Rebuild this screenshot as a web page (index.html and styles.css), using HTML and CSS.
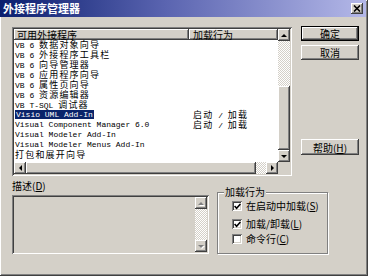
FILE: index.html
```html
<!DOCTYPE html>
<html lang="zh-CN">
<head>
    <meta charset="UTF-8">
    <title>外接程序管理器</title>
    <link rel="stylesheet" href="styles.css">
</head>
<body>
    <div class="window">
        <div class="titlebar">
            <span class="title">外接程序管理器</span>
            <div class="close raised">
                <svg width="8" height="7" viewBox="0 0 8 7">
                    <path d="M1 0.5 L7 6.5 M7 0.5 L1 6.5" stroke="#000" stroke-width="1.6" fill="none"/>
                </svg>
            </div>
        </div>

        <div class="content">
            <div class="top">
                <div class="listview">
                    <div class="lv-main">
                        <div class="lv-header">
                            <div class="hcell col1 raised">可用外接程序</div>
                            <div class="hcell col2 raised">加载行为</div>
                        </div>
                        <div class="lv-rows">
                            <div class="row"><span class="c1">VB 6 <span class="zh">数据对象向导</span></span></div>
                            <div class="row"><span class="c1">VB 6 <span class="zh">外接程序工具栏</span></span></div>
                            <div class="row"><span class="c1">VB 6 <span class="zh">向导管理器</span></span></div>
                            <div class="row"><span class="c1">VB 6 <span class="zh">应用程序向导</span></span></div>
                            <div class="row"><span class="c1">VB 6 <span class="zh">属性页向导</span></span></div>
                            <div class="row"><span class="c1">VB 6 <span class="zh">资源编辑器</span></span></div>
                            <div class="row"><span class="c1">VB T-SQL <span class="zh">调试器</span></span></div>
                            <div class="row"><span class="c1"><span class="sel">Visio UML Add-In</span></span><span class="c2"><span class="zh">启动</span> / <span class="zh">加载</span></span></div>
                            <div class="row"><span class="c1">Visual Component Manager 6.0</span><span class="c2"><span class="zh">启动</span> / <span class="zh">加载</span></span></div>
                            <div class="row"><span class="c1">Visual Modeler Add-In</span></div>
                            <div class="row"><span class="c1">Visual Modeler Menus Add-In</span></div>
                            <div class="row"><span class="c1"><span class="zh">打包和展开向导</span></span></div>
                        </div>
                    </div>
                    <div class="vscroll">
                        <div class="sb-btn raised"><span class="arr up"></span></div>
                        <div class="track" style="height: 45px"></div>
                        <div class="thumb raised" style="height: 64px"></div>
                        <div class="sb-btn raised"><span class="arr down"></span></div>
                    </div>
                    <div class="hscroll">
                        <div class="sb-btn raised"><span class="arr left"></span></div>
                        <div class="thumb raised" style="width: 230px"></div>
                        <div class="track" style="width: 10px"></div>
                        <div class="sb-btn raised"><span class="arr right"></span></div>
                    </div>
                    <div class="corner"></div>
                </div>

                <div class="buttons">
                    <div class="btn default">确定</div>
                    <div class="btn raised">取消</div>
                    <div class="btn raised help">帮助(<u>H</u>)</div>
                </div>
            </div>

            <div class="bottom">
                <div class="desc">
                    <div class="desc-label">描述(<u>D</u>)</div>
                    <div class="desc-box">
                        <div class="desc-scroll">
                            <div class="sb-btn raised"><span class="arr up off"></span></div>
                            <div class="track"></div>
                            <div class="sb-btn raised"><span class="arr down off"></span></div>
                        </div>
                    </div>
                </div>

                <fieldset class="group">
                    <legend>加载行为</legend>
                    <div class="checks">
                        <div class="cb-row first">
                            <span class="cb"><svg width="7" height="7" viewBox="0 0 7 7"><polyline points="0.6,3 2.6,5.2 6.4,1" stroke="#000" stroke-width="1.6" fill="none"/></svg></span>
                            <span>在启动中加载(<u>S</u>)</span>
                        </div>
                        <div class="cb-row second">
                            <span class="cb"><svg width="7" height="7" viewBox="0 0 7 7"><polyline points="0.6,3 2.6,5.2 6.4,1" stroke="#000" stroke-width="1.6" fill="none"/></svg></span>
                            <span>加载/卸载(<u>L</u>)</span>
                        </div>
                        <div class="cb-row third">
                            <span class="cb"></span>
                            <span>命令行(<u>C</u>)</span>
                        </div>
                    </div>
                </fieldset>
            </div>
        </div>
    </div>
</body>
</html>
```

FILE: styles.css
```css
* {
    box-sizing: border-box;
}

body {
    margin: 0;
    background: #d4d0c8;
    font-family: "Noto Sans CJK SC", sans-serif;
    font-size: 10px;
    color: #000;
}

.window {
    width: 368px;
    height: 276px;
    background: #d4d0c8;
    padding: 0 2px 2px 0;
    box-shadow: inset -1px -1px #404040, inset 1px 1px #fff, inset -2px -2px #808080;
}

.raised {
    background: #d4d0c8;
    box-shadow: inset -1px -1px #404040, inset 1px 1px #fff, inset -2px -2px #808080;
}

/* title bar */
.titlebar {
    height: 17px;
    display: flex;
    align-items: center;
    justify-content: space-between;
    padding: 0 3px 0 3px;
    background: linear-gradient(to right, #0a1e6e, #5a64b0 45%, #b4b8e8);
    color: #fff;
}

.title {
    font-weight: bold;
    font-size: 11px;
    line-height: 17px;
}

.close {
    width: 12px;
    height: 11px;
    display: flex;
    align-items: center;
    justify-content: center;
}

.content {
    padding: 10px 0 0 12px;
}

.top {
    display: flex;
    align-items: flex-start;
}

/* list view */
.listview {
    width: 280px;
    height: 149px;
    padding: 2px;
    background: #fff;
    box-shadow: inset 1px 1px #808080, inset -1px -1px #fff, inset 2px 2px #404040, inset -2px -2px #d4d0c8;
    display: grid;
    grid-template-columns: 264px 12px;
    grid-template-rows: 133px 12px;
}

.lv-header {
    display: flex;
    height: 11px;
}

.hcell {
    height: 11px;
    line-height: 11px;
    padding-left: 3px;
    white-space: nowrap;
}

.hcell.col1 {
    width: 175px;
}

.hcell.col2 {
    flex: 1;
    padding-left: 4px;
}

.lv-rows {
    font-family: "Liberation Mono", monospace;
    font-size: 8px;
}

.zh {
    font-family: "Noto Sans CJK SC", sans-serif;
    font-size: 9px;
    letter-spacing: 1.2px;
}

.row {
    display: flex;
    height: 10px;
    line-height: 10px;
    white-space: nowrap;
}

.c1 {
    width: 175px;
    padding-left: 1px;
}

.c2 {
    padding-left: 4px;
}

.sel {
    background: #0a246a;
    color: #fff;
    padding: 0 1px;
}

/* scroll bars */
.vscroll, .desc-scroll {
    display: flex;
    flex-direction: column;
}

.hscroll {
    display: flex;
}

.sb-btn {
    width: 12px;
    height: 12px;
    flex: none;
    display: flex;
    align-items: center;
    justify-content: center;
}

.track {
    background: repeating-conic-gradient(#d4d0c8 0 25%, #fff 0 50%) 0 0 / 2px 2px;
}

.corner {
    background: #d4d0c8;
}

.arr {
    width: 0;
    height: 0;
    border: solid transparent;
}

.arr.up {
    border-width: 0 3px 3px;
    border-bottom-color: #000;
}

.arr.down {
    border-width: 3px 3px 0;
    border-top-color: #000;
}

.arr.left {
    border-width: 3px 3px 3px 0;
    border-right-color: #000;
}

.arr.right {
    border-width: 3px 0 3px 3px;
    border-left-color: #000;
}

.arr.up.off {
    border-bottom-color: #808080;
    filter: drop-shadow(1px 1px 0 #fff);
}

.arr.down.off {
    border-top-color: #808080;
    filter: drop-shadow(1px 1px 0 #fff);
}

/* buttons */
.buttons {
    width: 58px;
    margin: -1px 0 0 9px;
    display: flex;
    flex-direction: column;
    gap: 4px;
}

.btn {
    height: 15px;
    display: flex;
    align-items: center;
    justify-content: center;
    line-height: 15px;
}

.btn.default {
    background: #d4d0c8;
    box-shadow: inset 0 0 0 1px #000, inset -2px -2px #404040, inset 2px 2px #fff, inset -3px -3px #808080;
}

.btn.help {
    height: 16px;
    margin-top: 75px;
}

/* bottom area */
.bottom {
    display: flex;
    gap: 8px;
}

.desc {
    width: 197px;
}

.desc-label {
    margin-top: 4px;
    height: 12px;
    line-height: 12px;
}

.desc-box {
    margin-top: 3px;
    height: 59px;
    padding: 2px;
    display: flex;
    justify-content: flex-end;
    box-shadow: inset 1px 1px #808080, inset -1px -1px #fff, inset 2px 2px #404040, inset -2px -2px #d4d0c8;
}

.desc-scroll {
    width: 12px;
}

.desc-scroll .track {
    flex: 1;
}

.group {
    width: 111px;
    height: 68px;
    margin: 10px 0 0 0;
    padding: 0 0 0 6px;
    border: 1px solid #808080;
    box-shadow: 1px 1px 0 #fff, inset 1px 1px 0 #fff;
}

.group legend {
    padding: 0 1px;
    line-height: 12px;
    background: #d4d0c8;
}

.checks {
    padding-left: 8px;
}

.cb-row {
    display: flex;
    align-items: center;
    gap: 4px;
    height: 12px;
    line-height: 12px;
    white-space: nowrap;
}

.cb-row.first {
    margin-top: 2px;
}

.cb-row.second {
    margin-top: 6px;
}

.cb-row.third {
    margin-top: 3px;
}

.cb {
    width: 10px;
    height: 10px;
    background: #fff;
    display: flex;
    align-items: center;
    justify-content: center;
    box-shadow: inset 1px 1px #808080, inset -1px -1px #fff, inset 2px 2px #404040, inset -2px -2px #d4d0c8;
}
```
